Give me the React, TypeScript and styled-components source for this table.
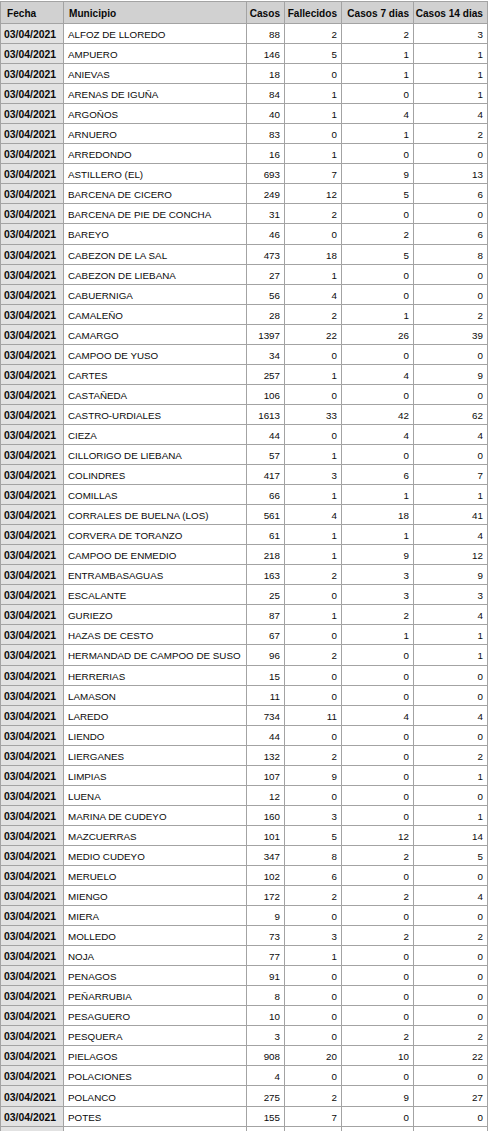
import React from "react";
import styled, { createGlobalStyle } from "styled-components";

const GlobalStyle = createGlobalStyle`
  html, body {
    margin: 0;
    padding: 0;
    background: #ffffff;
  }
  body {
    font-family: "Liberation Sans", Arial, Helvetica, sans-serif;
    overflow: hidden;
  }
`;

const Page = styled.div`
  padding-top: 1px;
  width: 489px;
  height: 1131px;
  overflow: hidden;
`;

const Grid = styled.div`
  display: grid;
  grid-template-columns: 62px 182px 37px 56px 71px 73px;
  grid-template-rows: 21px;
  grid-auto-rows: 19.06px;
  gap: 1px;
  padding: 1px;
  width: 488px;
  box-sizing: border-box;
  background: #a3a3a3;
`;

const Row = styled.div`
  display: contents;
`;

const HeadCell = styled.div<{ $right?: boolean; $first?: boolean }>`
  background: #d1d1d1;
  color: #0a0a0a;
  font-weight: bold;
  font-size: 10.1px;
  display: flex;
  align-items: center;
  justify-content: ${(p) => (p.$right ? "flex-end" : "flex-start")};
  padding: 2px ${(p) => (p.$right ? "4px" : "0")} 0
    ${(p) => (p.$right ? "0" : p.$first ? "6px" : "5px")};
  white-space: nowrap;
  overflow: hidden;
`;

const DateCell = styled.div`
  background: #e2e2e2;
  color: #0a0a0a;
  font-weight: bold;
  font-size: 10.4px;
  display: flex;
  align-items: center;
  padding: 2px 0 0 3px;
  white-space: nowrap;
  overflow: hidden;
`;

const Cell = styled.div<{ $right?: boolean }>`
  background: #ffffff;
  color: #0a0a0a;
  font-size: 9.8px;
  display: flex;
  align-items: center;
  justify-content: ${(p) => (p.$right ? "flex-end" : "flex-start")};
  padding: 2px ${(p) => (p.$right ? "4px" : "0")} 0 ${(p) => (p.$right ? "0" : "4px")};
  white-space: nowrap;
  overflow: hidden;
`;

type Rec = [string, number, number, number, number];

const data: Rec[] = [
  ["ALFOZ DE LLOREDO", 88, 2, 2, 3],
  ["AMPUERO", 146, 5, 1, 1],
  ["ANIEVAS", 18, 0, 1, 1],
  ["ARENAS DE IGUÑA", 84, 1, 0, 1],
  ["ARGOÑOS", 40, 1, 4, 4],
  ["ARNUERO", 83, 0, 1, 2],
  ["ARREDONDO", 16, 1, 0, 0],
  ["ASTILLERO (EL)", 693, 7, 9, 13],
  ["BARCENA DE CICERO", 249, 12, 5, 6],
  ["BARCENA DE PIE DE CONCHA", 31, 2, 0, 0],
  ["BAREYO", 46, 0, 2, 6],
  ["CABEZON DE LA SAL", 473, 18, 5, 8],
  ["CABEZON DE LIEBANA", 27, 1, 0, 0],
  ["CABUERNIGA", 56, 4, 0, 0],
  ["CAMALEÑO", 28, 2, 1, 2],
  ["CAMARGO", 1397, 22, 26, 39],
  ["CAMPOO DE YUSO", 34, 0, 0, 0],
  ["CARTES", 257, 1, 4, 9],
  ["CASTAÑEDA", 106, 0, 0, 0],
  ["CASTRO-URDIALES", 1613, 33, 42, 62],
  ["CIEZA", 44, 0, 4, 4],
  ["CILLORIGO DE LIEBANA", 57, 1, 0, 0],
  ["COLINDRES", 417, 3, 6, 7],
  ["COMILLAS", 66, 1, 1, 1],
  ["CORRALES DE BUELNA (LOS)", 561, 4, 18, 41],
  ["CORVERA DE TORANZO", 61, 1, 1, 4],
  ["CAMPOO DE ENMEDIO", 218, 1, 9, 12],
  ["ENTRAMBASAGUAS", 163, 2, 3, 9],
  ["ESCALANTE", 25, 0, 3, 3],
  ["GURIEZO", 87, 1, 2, 4],
  ["HAZAS DE CESTO", 67, 0, 1, 1],
  ["HERMANDAD DE CAMPOO DE SUSO", 96, 2, 0, 1],
  ["HERRERIAS", 15, 0, 0, 0],
  ["LAMASON", 11, 0, 0, 0],
  ["LAREDO", 734, 11, 4, 4],
  ["LIENDO", 44, 0, 0, 0],
  ["LIERGANES", 132, 2, 0, 2],
  ["LIMPIAS", 107, 9, 0, 1],
  ["LUENA", 12, 0, 0, 0],
  ["MARINA DE CUDEYO", 160, 3, 0, 1],
  ["MAZCUERRAS", 101, 5, 12, 14],
  ["MEDIO CUDEYO", 347, 8, 2, 5],
  ["MERUELO", 102, 6, 0, 0],
  ["MIENGO", 172, 2, 2, 4],
  ["MIERA", 9, 0, 0, 0],
  ["MOLLEDO", 73, 3, 2, 2],
  ["NOJA", 77, 1, 0, 0],
  ["PENAGOS", 91, 0, 0, 0],
  ["PEÑARRUBIA", 8, 0, 0, 0],
  ["PESAGUERO", 10, 0, 0, 0],
  ["PESQUERA", 3, 0, 2, 2],
  ["PIELAGOS", 908, 20, 10, 22],
  ["POLACIONES", 4, 0, 0, 0],
  ["POLANCO", 275, 2, 9, 27],
  ["POTES", 155, 7, 0, 0],
];

export default function App() {
  return (
    <>
      <GlobalStyle />
      <Page>
        <Grid>
          <Row>
            <HeadCell $first>Fecha</HeadCell>
            <HeadCell>Municipio</HeadCell>
            <HeadCell $right>Casos</HeadCell>
            <HeadCell $right>Fallecidos</HeadCell>
            <HeadCell $right>Casos 7 dias</HeadCell>
            <HeadCell $right>Casos 14 dias</HeadCell>
          </Row>
          {data.map(([name, c, f, c7, c14]) => (
            <Row key={name}>
              <DateCell>03/04/2021</DateCell>
              <Cell>{name}</Cell>
              <Cell $right>{c}</Cell>
              <Cell $right>{f}</Cell>
              <Cell $right>{c7}</Cell>
              <Cell $right>{c14}</Cell>
            </Row>
          ))}
          <Row>
            <DateCell />
            <Cell />
            <Cell $right />
            <Cell $right />
            <Cell $right />
            <Cell $right />
          </Row>
        </Grid>
      </Page>
    </>
  );
}
